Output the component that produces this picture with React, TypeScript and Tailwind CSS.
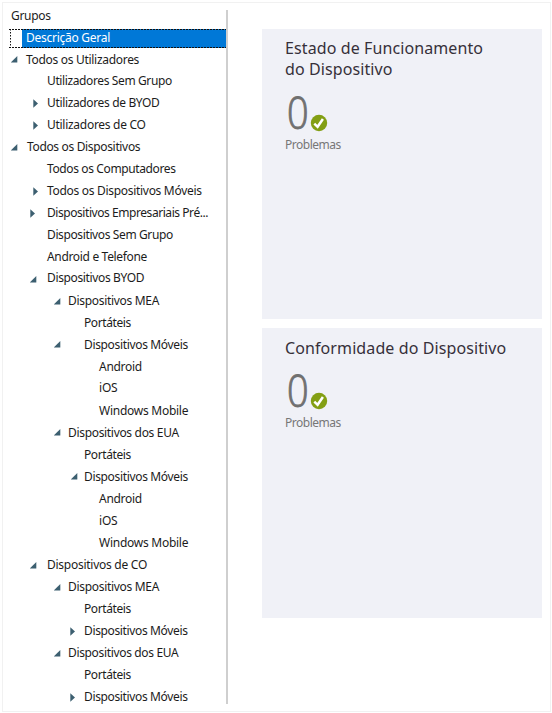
import type { ReactNode } from 'react';

type Row = { label: string; text: string; arrow?: 'open' | 'closed'; slot: string };

const rows: Row[] = [
  { label: 'Todos os Utilizadores', slot: 'pl-[8px] w-[23px]', arrow: 'open', text: 'tracking-[-0.3px] pt-[2px]' },
  { label: 'Utilizadores Sem Grupo', slot: 'w-[44px]', text: 'tracking-[-0.38px]' },
  { label: 'Utilizadores de BYOD', slot: 'pl-[30px] w-[44px]', arrow: 'closed', text: 'tracking-[-0.35px]' },
  { label: 'Utilizadores de CO', slot: 'pl-[30px] w-[44px]', arrow: 'closed', text: 'tracking-[-0.28px]' },
  { label: 'Todos os Dispositivos', slot: 'pl-[8px] w-[24px]', arrow: 'open', text: 'tracking-[-0.34px]' },
  { label: 'Todos os Computadores', slot: 'w-[44px]', text: 'tracking-[-0.38px]' },
  { label: 'Todos os Dispositivos Móveis', slot: 'pl-[30px] w-[44px]', arrow: 'closed', text: 'tracking-[-0.3px]' },
  { label: 'Dispositivos Empresariais Pré...', slot: 'pl-[27px] w-[44px] pt-px', arrow: 'closed', text: 'tracking-[-0.44px]' },
  { label: 'Dispositivos Sem Grupo', slot: 'w-[44px]', text: 'tracking-[-0.38px]' },
  { label: 'Android e Telefone', slot: 'w-[44px]', text: 'tracking-[-0.33px]' },
  { label: 'Dispositivos BYOD', slot: 'pl-[27px] w-[44px]', arrow: 'open', text: 'tracking-[-0.36px] pb-[2px]' },
  { label: 'Dispositivos MEA', slot: 'pl-[51px] w-[65px]', arrow: 'open', text: 'tracking-[-0.31px]' },
  { label: 'Portáteis', slot: 'w-[81px]', text: 'tracking-[-0.4px]' },
  { label: 'Dispositivos Móveis', slot: 'pl-[51px] w-[81px] pb-[2px]', arrow: 'open', text: 'tracking-[-0.34px]' },
  { label: 'Android', slot: 'w-[96px]', text: 'tracking-[-0.28px]' },
  { label: 'iOS', slot: 'w-[96px]', text: 'tracking-[-0.2px] pb-[2px]' },
  { label: 'Windows Mobile', slot: 'w-[96px]', text: 'tracking-[-0.26px]' },
  { label: 'Dispositivos dos EUA', slot: 'pl-[51px] w-[65px] pb-[2px]', arrow: 'open', text: 'tracking-[-0.32px]' },
  { label: 'Portáteis', slot: 'w-[81px]', text: 'tracking-[-0.4px]' },
  { label: 'Dispositivos Móveis', slot: 'pl-[68px] w-[81px] pb-[2px]', arrow: 'open', text: 'tracking-[-0.34px]' },
  { label: 'Android', slot: 'w-[96px]', text: 'tracking-[-0.28px]' },
  { label: 'iOS', slot: 'w-[96px]', text: 'tracking-[-0.2px]' },
  { label: 'Windows Mobile', slot: 'w-[96px]', text: 'tracking-[-0.26px]' },
  { label: 'Dispositivos de CO', slot: 'pl-[27px] w-[44px] pt-px', arrow: 'open', text: 'tracking-[-0.26px]' },
  { label: 'Dispositivos MEA', slot: 'pl-[51px] w-[65px]', arrow: 'open', text: 'tracking-[-0.31px]' },
  { label: 'Portáteis', slot: 'w-[81px]', text: 'tracking-[-0.4px]' },
  { label: 'Dispositivos Móveis', slot: 'pl-[67px] w-[81px]', arrow: 'closed', text: 'tracking-[-0.36px]' },
  { label: 'Dispositivos dos EUA', slot: 'pl-[51px] w-[65px]', arrow: 'open', text: 'tracking-[-0.34px]' },
  { label: 'Portáteis', slot: 'w-[81px]', text: 'tracking-[-0.4px]' },
  { label: 'Dispositivos Móveis', slot: 'pl-[67px] w-[81px] pt-px', arrow: 'closed', text: 'tracking-[-0.36px]' },
];

function Arrow({ kind }: { kind: 'open' | 'closed' }) {
  return kind === 'open' ? (
    <svg className="block h-[7px] w-[7px]" viewBox="0 0 7 7"><path d="M6.3 0V6.4H-.1Z" fill="#3c5f70" /></svg>
  ) : (
    <svg className="block h-[9px] w-[6px]" viewBox="0 0 6 9"><path d="M.3 .3L5 4.5L.3 8.7Z" fill="#3c5f70" /></svg>
  );
}

function Card({ title, className, numberGap }: { title: ReactNode; className: string; numberGap: string }) {
  return (
    <section className={`h-[290px] w-[280px] bg-[#f0f1f7] pl-[23px] ${className}`}>
      <h2 className="text-[16px] leading-[21px] tracking-[0.1px] whitespace-nowrap text-[#36303a]">{title}</h2>
      <div className={`flex h-[36px] items-end ${numberGap}`}>
        <span className="ml-[2px] w-[24px] origin-left scale-x-[0.86] font-['Open_Sans'] text-[44px] leading-[38px] font-light text-[#707070] [-webkit-text-stroke:1px_#707070]">0</span>
        <svg className="-mb-px h-[18px] w-[18px] shrink-0 -ml-px" viewBox="0 0 18 18">
          <circle cx="9" cy="9" r="8.2" fill="#839f14" />
          <path d="M4.3 9.6L7.6 12.8L12.9 5" fill="none" stroke="#fff" strokeWidth="2.5" />
        </svg>
      </div>
      <p className="mt-[5px] text-[12px] leading-[18px] tracking-[-0.48px] text-[#777]">Problemas</p>
    </section>
  );
}

export default function App() {
  return (
    <div className="h-[713px] w-[552px] overflow-hidden bg-white pt-[2px] pl-[2px] font-['Noto_Sans','Open_Sans',sans-serif]">
      <main className="flex h-[710px] w-[549px] border border-[#f1f1f1]">
        <aside className="mt-[7px] h-[694px] w-[225px] shrink-0 border-r-2 border-[#cfcfcf] text-[12px] whitespace-nowrap text-[#1c1c1c]">
          <h1 className="h-[19px] pl-[8px] leading-[11px] tracking-[-0.3px]">Grupos</h1>
          <div className="relative flex h-[19px] items-center pl-[19px]">
            <div className="flex h-full flex-1 items-center bg-[#0078d7] pb-px pl-[4px] tracking-[-0.26px] text-white">Descrição Geral</div>
            <svg className="absolute top-0 left-[6px] h-[19px] w-[217px]" viewBox="0 0 217 19">
              <path d="M0 .5H217M0 18.5H217" fill="none" stroke="#111" strokeDasharray="2 1" />
              <path d="M1.5 0V19" fill="none" stroke="#111" strokeDasharray="1.5 1.5" />
            </svg>
          </div>
          <ul>
            {rows.map((r, i) => (
              <li key={i} className="flex h-[22px] items-center">
                <span className={`shrink-0 ${r.slot}`}>{r.arrow && <Arrow kind={r.arrow} />}</span>
                <span className={r.text}>{r.label}</span>
              </li>
            ))}
          </ul>
        </aside>
        <div className="flex flex-col gap-[9px] pt-[26px] pl-[34px]">
          <Card className="pt-[9px]" numberGap="mt-[15px]" title={<>Estado de Funcionamento<br />do Dispositivo</>} />
          <Card className="pt-[10px]" numberGap="mt-[14px]" title="Conformidade do Dispositivo" />
        </div>
      </main>
    </div>
  );
}
